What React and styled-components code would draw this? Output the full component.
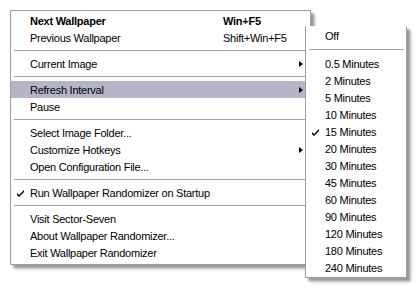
import React from "react";
import styled, { createGlobalStyle } from "styled-components";

const GlobalStyle = createGlobalStyle`
  html, body { margin: 0; padding: 0; background: #ffffff; }
  body {
    font-family: "Liberation Sans", Arial, sans-serif;
    font-size: 11px;
    color: #000;
    -webkit-font-smoothing: none;
  }
`;

const Stage = styled.div`
  position: relative;
  width: 420px;
  height: 291px;
  padding: 10px 0 0 10px;
  box-sizing: border-box;
  background: #fff;
`;

const Menu = styled.div`
  box-sizing: border-box;
  width: ${(p) => p.$width}px;
  background: #fff;
  border: 1px solid #9f9f9f;
  border-top-color: ${(p) => (p.$openTop ? "#ffffff" : "#9f9f9f")};
  padding: ${(p) => p.$pad};
  box-shadow: 3px 3px 2px rgba(0, 0, 0, 0.32), 5px 5px 3px rgba(0, 0, 0, 0.12);
`;

const SubMenu = styled(Menu)`
  position: absolute;
  left: 305px;
  top: 26px;
`;

const Item = styled.div`
  box-sizing: border-box;
  display: grid;
  grid-template-columns: 19px 1fr ${(p) => (p.$sub ? "0" : "67px 20px")};
  align-items: center;
  height: 17px;
  padding-top: 1px;
  background: ${(p) => (p.$active ? "#b5b4c9" : "transparent")};
  font-weight: ${(p) => (p.$bold ? "bold" : "normal")};
  letter-spacing: -0.25px;
  white-space: nowrap;
`;

const CheckCell = styled.span`
  display: flex;
  justify-content: center;
  align-items: center;
`;

const Label = styled.span`
  line-height: 16px;
`;

const Shortcut = styled.span`
  line-height: 16px;
`;

const ArrowCell = styled.span`
  display: flex;
  justify-content: center;
  align-items: center;
`;

const Arrow = styled.span`
  width: 0;
  height: 0;
  border-top: 3.5px solid transparent;
  border-bottom: 3.5px solid transparent;
  border-left: 4px solid #000;
  margin-left: 1px;
`;

const Separator = styled.div`
  height: 9px;
  display: flex;
  align-items: center;
  padding: 0 2px 0 3px;
  &::after {
    content: "";
    flex: 1;
    height: 1px;
    background: #a3a3a3;
  }
`;

const SubSeparator = styled(Separator)`
  height: 11px;
`;

const Check = () => (
  <svg width="7" height="7" viewBox="0 0 7 7">
    <path d="M0 3 L2 5 L7 0 L7 2 L2 7 L0 5 Z" fill="#000" />
  </svg>
);

const mainItems = [
  { label: "Next Wallpaper", shortcut: "Win+F5", bold: true },
  { label: "Previous Wallpaper", shortcut: "Shift+Win+F5" },
  "sep",
  { label: "Current Image", arrow: true },
  "sep",
  { label: "Refresh Interval", arrow: true, active: true },
  { label: "Pause" },
  "sep",
  { label: "Select Image Folder..." },
  { label: "Customize Hotkeys", arrow: true },
  { label: "Open Configuration File..." },
  "sep",
  { label: "Run Wallpaper Randomizer on Startup", checked: true },
  "sep",
  { label: "Visit Sector-Seven" },
  { label: "About Wallpaper Randomizer..." },
  { label: "Exit Wallpaper Randomizer" },
];

const intervals = [
  "0.5 Minutes",
  "2 Minutes",
  "5 Minutes",
  "10 Minutes",
  "15 Minutes",
  "20 Minutes",
  "30 Minutes",
  "45 Minutes",
  "60 Minutes",
  "90 Minutes",
  "120 Minutes",
  "180 Minutes",
  "240 Minutes",
];

export default function App() {
  return (
    <>
      <GlobalStyle />
      <Stage>
        <Menu $width={301} $pad="1px 0 3px">
          {mainItems.map((it, i) =>
            it === "sep" ? (
              <Separator key={i} />
            ) : (
              <Item key={i} $bold={it.bold} $active={it.active}>
                <CheckCell>{it.checked ? <Check /> : null}</CheckCell>
                <Label>{it.label}</Label>
                <Shortcut>{it.shortcut || ""}</Shortcut>
                <ArrowCell>{it.arrow ? <Arrow /> : null}</ArrowCell>
              </Item>
            )
          )}
        </Menu>
        <SubMenu $width={102} $pad="0 0 1px" $openTop>
          <Item $sub>
            <CheckCell />
            <Label>Off</Label>
          </Item>
          <SubSeparator />
          {intervals.map((t) => (
            <Item $sub key={t}>
              <CheckCell>{t === "15 Minutes" ? <Check /> : null}</CheckCell>
              <Label>{t}</Label>
            </Item>
          ))}
        </SubMenu>
      </Stage>
    </>
  );
}
